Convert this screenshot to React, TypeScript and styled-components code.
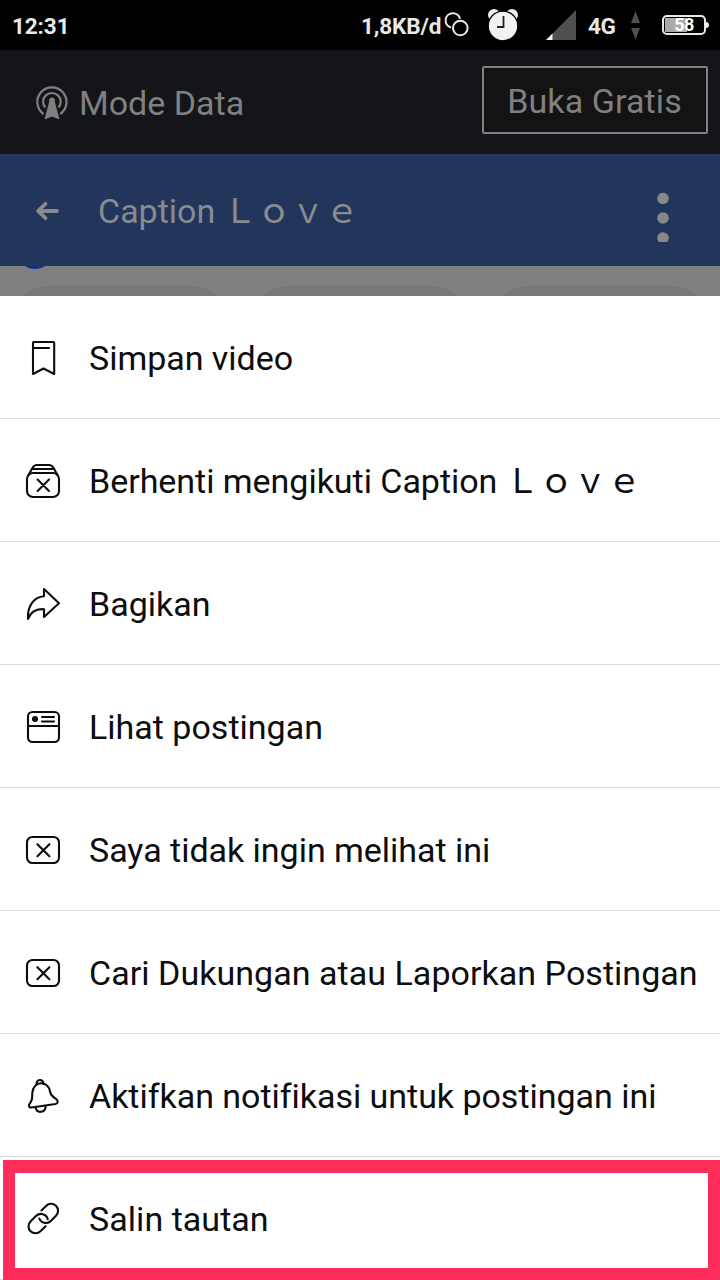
import React from "react";
import styled, { createGlobalStyle } from "styled-components";

const GlobalStyle = createGlobalStyle`
  * { box-sizing: border-box; }
  body {
    margin: 0;
    background: #000;
    font-family: Roboto, "Noto Sans CJK JP", sans-serif;
    font-variant-ligatures: none;
  }
  svg { display: block; flex: none; }
`;

const Screen = styled.main`
  position: relative;
  width: 720px;
  height: 1280px;
  overflow: hidden;
  background: #fff;
`;

const StatusBar = styled.header`
  display: flex;
  align-items: center;
  height: 50px;
  padding: 0 11px 0 12px;
  background: #000;
  color: #e8e8e8;
`;

const StatusText = styled.span<{ $push?: boolean; $width?: number }>`
  font-size: 22.5px;
  font-weight: 700;
  line-height: 30px;
  letter-spacing: -0.1px;
  white-space: nowrap;
  padding-top: 2px;
  width: ${(p) => (p.$width ? `${p.$width}px` : "auto")};
  margin-left: ${(p) => (p.$push ? "auto" : "0")};
`;

const Network = styled(StatusText)`
  padding-left: 7px;
  letter-spacing: -0.4px;
`;

const Battery = styled.div`
  display: flex;
  align-items: center;
  margin-left: 21px;
`;

const BatteryBody = styled.div`
  display: flex;
  align-items: center;
  justify-content: center;
  width: 44px;
  height: 20px;
  border: 2px solid #e8e8e8;
  border-radius: 5px;
  background: linear-gradient(90deg, #aaa 0 22px, #000 22px) 1px 1px / 38px 14px no-repeat #000;
  color: #fff;
  font-size: 18px;
  font-weight: 700;
  line-height: 18px;
  letter-spacing: -0.5px;
`;

const BatteryTip = styled.div`
  width: 3px;
  height: 6px;
  border-radius: 0 3px 3px 0;
  background: #e8e8e8;
`;

const DataBar = styled.section`
  display: flex;
  align-items: center;
  height: 104px;
  padding: 0 12px 4px 35px;
  background: #141519;
  color: #808080;
`;

const AntennaIcon = styled.svg`
  margin-top: 5px;
`;

const DataLabel = styled.span`
  flex: 1;
  margin-left: 10px;
  padding-top: 6px;
  font-size: 34px;
  line-height: 40px;
`;

const OpenButton = styled.button`
  width: 226px;
  height: 68px;
  padding: 2px 1px 0 0;
  border: 2px solid #808080;
  border-radius: 2px;
  background: #131313;
  color: #808080;
  font: 400 34px/40px Roboto, sans-serif;
  letter-spacing: 0.1px;
`;

const TitleBar = styled.section`
  display: flex;
  align-items: center;
  height: 112px;
  padding: 0 50px 0 35px;
  background: #22355b;
  color: #888b90;
`;

const BackIcon = styled.svg`
  margin-top: 2px;
`;

const MoreIcon = styled.svg`
  margin-top: 14px;
`;

const Title = styled.h1`
  flex: 1;
  margin: 0 0 0 38px;
  padding-top: 2px;
  font-size: 34px;
  font-weight: 400;
  line-height: 40px;
  white-space: pre;
`;

const Wide = styled.span<{ $shift?: number }>`
  margin-left: ${(p) => p.$shift ?? -1.5}px;
  font-family: "Noto Sans CJK JP", sans-serif;
  font-weight: 400;
  line-height: 1;
`;

const PageStrip = styled.section`
  position: relative;
  display: flex;
  gap: 28px;
  height: 30px;
  padding: 20px 14px 0;
  overflow: hidden;
  background: #808080;
`;

const Chip = styled.div`
  flex: none;
  width: 212px;
  height: 68px;
  border-radius: 34px;
  background: #77787a;
`;

const BlueDot = styled.div`
  position: absolute;
  left: 17px;
  top: -33px;
  width: 36px;
  height: 36px;
  border-radius: 50%;
  background: #0c308c;
`;

const Menu = styled.ul`
  margin: 0;
  padding: 0;
  list-style: none;
  background: #fff;
`;

const MenuRow = styled.li`
  display: flex;
  align-items: center;
  gap: 26px;
  height: 123px;
  padding-left: 23px;
  border-bottom: 1px solid #d8dbdd;
  color: #0c0d0e;
`;

const RowLabel = styled.span<{ $tracking?: number }>`
  padding-top: 2px;
  font-size: 34px;
  line-height: 40px;
  letter-spacing: ${(p) => p.$tracking ?? -0.03}px;
  white-space: pre;
`;

const RowIcon = styled.svg`
  width: 40px;
  height: 40px;
  margin-top: -1px;
  fill: none;
  stroke: #0c0d0e;
  stroke-width: 2.1;
  stroke-linecap: round;
  stroke-linejoin: round;
`;

const Highlight = styled.div`
  position: absolute;
  left: 3px;
  top: 1160px;
  width: 717px;
  height: 120px;
  border: 12px solid #ff2d5a;
  border-top-width: 13px;
  pointer-events: none;
`;

const BoxedX = (
  <>
    <rect x="4" y="8" width="32" height="26" rx="5.5" />
    <path d="M14.4 15.2 26.4 27.2M26.4 15.2 14.4 27.2" />
  </>
);

const LOVE = "Ｌｏｖｅ";

const items: { icon: React.ReactNode; label: string; wide?: string; tracking?: number }[] = [
  { icon: <path d="M10.5 5h20q.7 0 .7.7V37L20.5 31.5 10 37V5.7q0-.7.7-.7M10 11h16" />, label: "Simpan video" },
  {
    icon: (
      <>
        <rect x="4" y="13" width="32" height="24" rx="6" />
        <path d="M5.5 15 9.5 8Q11 5 14 5h12q3 0 4.5 3l4 7M8.5 9h23M14.6 19.5 26 31M26 19.5 14.6 31" />
      </>
    ),
    label: "Berhenti mengikuti Caption ",
    wide: LOVE,
  },
  { icon: <path d="M21 6 36 20.3 21 34V26.2C13 25.5 8 28 5 36 4 23.5 11 14 21 13.3Z" />, label: "Bagikan", tracking: 0 },
  {
    icon: (
      <>
        <rect x="5" y="6" width="31" height="30" rx="4.5" />
        <path d="M5 20h31M19 11h12M19 15.5h12" />
        <circle cx="12" cy="13" r="2" fill="#0c0d0e" />
      </>
    ),
    label: "Lihat postingan",
    tracking: 0,
  },
  { icon: BoxedX, label: "Saya tidak ingin melihat ini" },
  { icon: BoxedX, label: "Cari Dukungan atau Laporkan Postingan", tracking: 0.04 },
  {
    icon: (
      <>
        <path d="M8.5 32.5C5 32.5 5.5 30 7.5 27.5 10 24 9 21.5 9.3 18 10 12 13 8.8 17.5 8.3 23 8 26.3 12 27 16.5 27.6 20.5 30 22 33 23.8 35.8 26 34.8 28.6 32.5 29Z" />
        <path d="M13.6 9.5C13 3.5 20 3.5 20.5 9M12.5 32.5C14 39 22.5 38 22.7 31" />
      </>
    ),
    label: "Aktifkan notifikasi untuk postingan ini",
  },
  {
    icon: (
      <path d="M18.5 12.4 23 7.9A7 7 0 0 1 33 17.8L27.3 23.4A7 7 0 0 1 16.3 20.5M22.6 28.2 17.5 33.2A7 7 0 0 1 7.5 23.4L13.2 17.8A7 7 0 0 1 24.8 21.2" />
    ),
    label: "Salin tautan",
    tracking: 0.04,
  },
];

export default function App() {
  return (
    <>
      <GlobalStyle />
      <Screen>
        <StatusBar>
          <StatusText>12:31</StatusText>
          <StatusText $push $width={82}>1,8KB/d</StatusText>
          <svg width="138" height="50" viewBox="443 0 138 50">
            <path d="M451 27.5A7.3 7.3 0 1 1 460 18.7" fill="none" stroke="#e8e8e8" strokeWidth="2" />
            <circle cx="460.3" cy="28" r="7.3" fill="#000" stroke="#e8e8e8" strokeWidth="2" />
            <circle cx="494" cy="15" r="6" fill="#eee" />
            <circle cx="512" cy="15" r="6" fill="#eee" />
            <circle cx="503" cy="26" r="14.8" fill="#f2f2f2" stroke="#000" strokeWidth="1.3" />
            <path d="M503.5 16v11H497" fill="none" stroke="#222" strokeWidth="1.8" />
            <path d="M546 40 576 10V40Z" fill="#505050" />
            <path d="M546 40 552.5 33.5V40Z" fill="#eee" />
          </svg>
          <Network $width={49}>4G</Network>
          <svg width="11" height="50" viewBox="630 0 11 50">
            <path d="M635.5 11 640 23h-9ZM635.5 39.5 640 28h-9Z" fill="#505050" />
          </svg>
          <Battery>
            <BatteryBody>58</BatteryBody>
            <BatteryTip />
          </Battery>
        </StatusBar>
        <DataBar>
          <AntennaIcon width="34" height="36" viewBox="0 0 34 36" fill="none" stroke="#808080" strokeWidth="2.2">
            <path d="M8.5 29A14.6 14.6 0 1 1 25.3 29M10.2 22.5A8.8 8.8 0 1 1 23.6 22.5" />
            <path d="M14.2 16.5a3 3 0 1 1 5.6 0L24.5 34.5 17 31.5 9.5 34.5Z" fill="#808080" stroke="none" />
          </AntennaIcon>
          <DataLabel>Mode Data</DataLabel>
          <OpenButton>Buka Gratis</OpenButton>
        </DataBar>
        <TitleBar>
          <BackIcon width="25" height="20" viewBox="0 0 25 20" fill="none" stroke="#888b90" strokeWidth="3.8" strokeLinecap="round" strokeLinejoin="round">
            <path d="M10.5 2.8 3 10l7.5 7.2M4 10h18" />
          </BackIcon>
          <Title>
            Caption <Wide $shift={-0.7}>{LOVE}</Wide>
          </Title>
          <MoreIcon width="14" height="50" viewBox="0 0 14 50" fill="#888">
            <circle cx="7" cy="6.5" r="5.8" />
            <circle cx="7" cy="26" r="5.8" />
            <circle cx="7" cy="46" r="5.8" />
          </MoreIcon>
        </TitleBar>
        <PageStrip>
          <BlueDot />
          <Chip />
          <Chip />
          <Chip />
        </PageStrip>
        <Menu>
          {items.map((item) => (
            <MenuRow key={item.label}>
              <RowIcon viewBox="0 0 40 40">{item.icon}</RowIcon>
              <RowLabel $tracking={item.tracking}>
                {item.label}
                {item.wide && <Wide $shift={-0.5}>{item.wide}</Wide>}
              </RowLabel>
            </MenuRow>
          ))}
        </Menu>
        <Highlight />
      </Screen>
    </>
  );
}
